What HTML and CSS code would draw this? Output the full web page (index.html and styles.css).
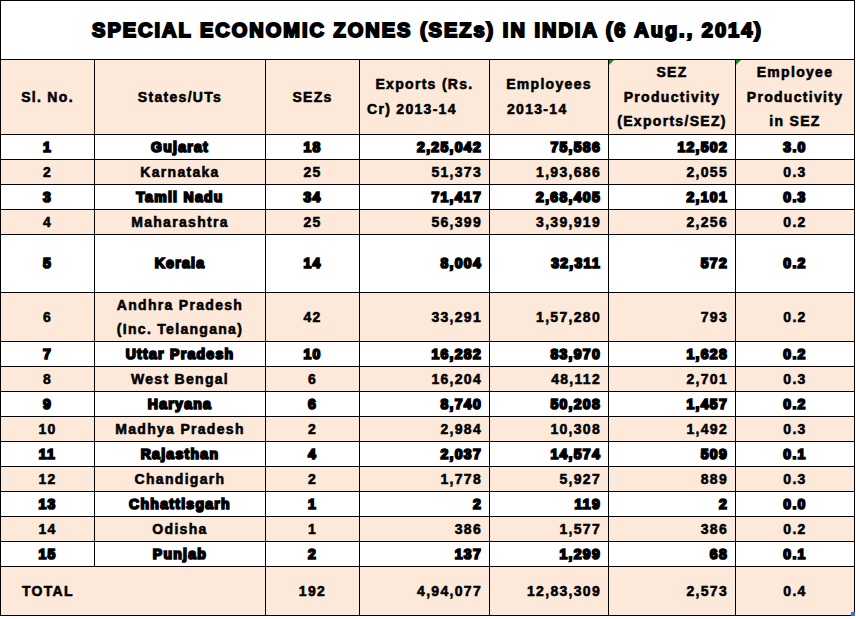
FILE: index.html
```html
<!DOCTYPE html>
<html lang="en">
<head>
<meta charset="utf-8">
<title>Special Economic Zones (SEZs) in India</title>
<link rel="stylesheet" href="styles.css">
</head>
<body>
<table class="sez">
  <colgroup>
    <col class="c-sl"><col class="c-state"><col class="c-sez"><col class="c-exp"><col class="c-emp"><col class="c-prod"><col class="c-eprod">
  </colgroup>
  <tr class="r-title"><td colspan="7" class="title">SPECIAL ECONOMIC ZONES (SEZs) IN INDIA (6 Aug., 2014)</td></tr>
  <tr class="r-head">
    <th>Sl. No.</th>
    <th>States/UTs</th>
    <th>SEZs</th>
    <th><span class="ln">Exports (Rs.</span><span class="ln ln-exp">Cr) 2013-14</span></th>
    <th><span class="ln">Employees</span><span class="ln ln-emp">2013-14</span></th>
    <th class="flag"><span class="ln">SEZ</span><span class="ln">Productivity</span><span class="ln">(Exports/SEZ)</span></th>
    <th class="flag"><span class="ln">Employee</span><span class="ln">Productivity</span><span class="ln">in SEZ</span></th>
  </tr>
  <tr class="r heavy"><td>1</td><td>Gujarat</td><td>18</td><td class="num">2,25,042</td><td class="num">75,586</td><td class="num">12,502</td><td>3.0</td></tr>
  <tr class="r peach"><td>2</td><td>Karnataka</td><td>25</td><td class="num">51,373</td><td class="num">1,93,686</td><td class="num">2,055</td><td>0.3</td></tr>
  <tr class="r heavy"><td>3</td><td>Tamil Nadu</td><td>34</td><td class="num">71,417</td><td class="num">2,68,405</td><td class="num">2,101</td><td>0.3</td></tr>
  <tr class="r peach"><td>4</td><td>Maharashtra</td><td>25</td><td class="num">56,399</td><td class="num">3,39,919</td><td class="num">2,256</td><td>0.2</td></tr>
  <tr class="r r-tall heavy"><td>5</td><td>Kerala</td><td>14</td><td class="num">8,004</td><td class="num">32,311</td><td class="num">572</td><td>0.2</td></tr>
  <tr class="r r-two peach"><td>6</td><td><span class="ln">Andhra Pradesh</span><span class="ln">(Inc. Telangana)</span></td><td>42</td><td class="num">33,291</td><td class="num">1,57,280</td><td class="num">793</td><td>0.2</td></tr>
  <tr class="r heavy"><td>7</td><td>Uttar Pradesh</td><td>10</td><td class="num">16,282</td><td class="num">83,970</td><td class="num">1,628</td><td>0.2</td></tr>
  <tr class="r peach"><td>8</td><td>West Bengal</td><td>6</td><td class="num">16,204</td><td class="num">48,112</td><td class="num">2,701</td><td>0.3</td></tr>
  <tr class="r heavy"><td>9</td><td>Haryana</td><td>6</td><td class="num">8,740</td><td class="num">50,208</td><td class="num">1,457</td><td>0.2</td></tr>
  <tr class="r peach"><td>10</td><td>Madhya Pradesh</td><td>2</td><td class="num">2,984</td><td class="num">10,308</td><td class="num">1,492</td><td>0.3</td></tr>
  <tr class="r heavy"><td>11</td><td>Rajasthan</td><td>4</td><td class="num">2,037</td><td class="num">14,574</td><td class="num">509</td><td>0.1</td></tr>
  <tr class="r peach"><td>12</td><td>Chandigarh</td><td>2</td><td class="num">1,778</td><td class="num">5,927</td><td class="num">889</td><td>0.3</td></tr>
  <tr class="r heavy"><td>13</td><td>Chhattisgarh</td><td>1</td><td class="num">2</td><td class="num">119</td><td class="num">2</td><td>0.0</td></tr>
  <tr class="r peach"><td>14</td><td>Odisha</td><td>1</td><td class="num">386</td><td class="num">1,577</td><td class="num">386</td><td>0.2</td></tr>
  <tr class="r heavy"><td>15</td><td>Punjab</td><td>2</td><td class="num">137</td><td class="num">1,299</td><td class="num">68</td><td>0.1</td></tr>
  <tr class="r-total peach"><td colspan="2" class="total-label">TOTAL</td><td>192</td><td class="num">4,94,077</td><td class="num">12,83,309</td><td class="num">2,573</td><td class="corner">0.4</td></tr>
</table>
</body>
</html>
```
FILE: styles.css
```css
body {
  margin: 0;
  background: #fff;
  font-family: "Liberation Sans", Arial, sans-serif;
  color: #000;
}

.sez {
  border-collapse: collapse;
  table-layout: fixed;
  width: 855px;
}

.c-sl { width: 94px; }
.c-state { width: 171px; }
.c-sez { width: 94px; }
.c-exp { width: 130px; }
.c-emp { width: 119px; }
.c-prod { width: 127px; }
.c-eprod { width: 119px; }

.sez td,
.sez th {
  border: 1px solid #000;
  padding: 0;
  font-weight: 700;
  font-size: 14px;
  letter-spacing: 1.3px;
  line-height: 24px;
  text-align: center;
  vertical-align: middle;
  white-space: nowrap;
  color: #000;
  -webkit-text-stroke: 0.55px #000;
}

.sez th { line-height: 24.6px; }

.r-title { height: 59px; background: #fff; }
.r-head { height: 74px; background: #fde9d9; }
.r { height: 24px; }
.r-tall { height: 58px; }
.r-two { height: 48px; }
.r-total { height: 49px; }

.peach { background: #fde9d9; }
.r.heavy { background: #fff; }

.sez .title {
  font-size: 20px;
  letter-spacing: 2px;
  -webkit-text-stroke: 1.9px #000;
}

.sez .heavy td {
  -webkit-text-stroke: 1.7px #000;
}

.ln { display: block; }
.ln-exp { text-align: left; padding-left: 7px; }
.ln-emp { text-align: left; padding-left: 17px; }

.sez .num {
  text-align: right;
  padding-right: 7px;
}

.sez .total-label {
  text-align: left;
  padding-left: 21px;
}

.flag { position: relative; }
.flag::before {
  content: "";
  position: absolute;
  left: 0;
  top: 0;
  border-top: 5px solid #1f8a1f;
  border-right: 5px solid transparent;
}

.corner { position: relative; }
.corner::after {
  content: "";
  position: absolute;
  right: -1px;
  bottom: -1px;
  width: 4px;
  height: 4px;
  background: #3d6fc4;
}
```
